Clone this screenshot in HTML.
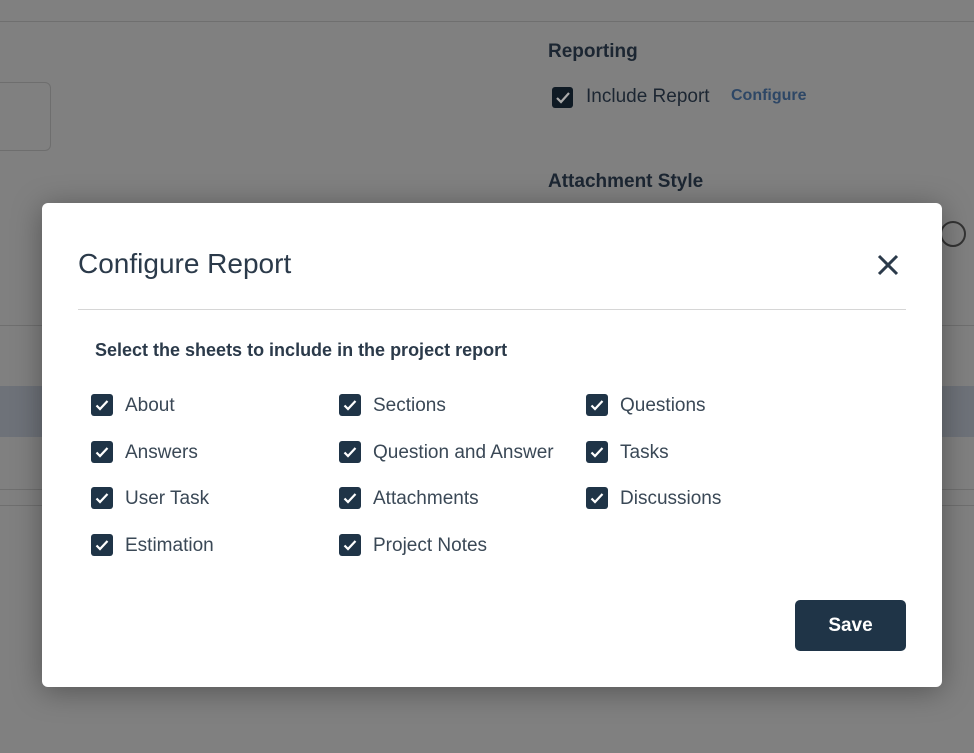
<!DOCTYPE html>
<html><head><style>
body{margin:0;width:974px;height:753px;background:#808080;font-family:"Liberation Sans",sans-serif;position:relative;overflow:hidden}
.a{position:absolute}
.ln{position:absolute;height:1px;background:#6f6f6f}
.cb{position:absolute;width:22px;height:22px;background:#1f3447;border-radius:3px}
.cb svg{position:absolute;left:3px;top:3px}
.lbl{position:absolute;font-size:19px;color:#3a4856;line-height:22px}
</style></head><body>
<div class="ln" style="left:0;top:21px;width:974px"></div>
<div class="a" style="left:-10px;top:82px;width:59px;height:67px;border:1px solid #6e6e6e;border-radius:6px"></div>
<div class="a" style="left:548px;top:41px;font-size:19px;font-weight:bold;color:#1c2632">Reporting</div>
<div class="a" style="left:552px;top:87px;width:21px;height:21px;background:#0f1a24;border-radius:3px"><svg width="21" height="21"><path d="M5 11l4 4 8-9" stroke="#aaa" stroke-width="2.2" fill="none"/></svg></div>
<div class="a" style="left:586px;top:86px;font-size:19px;color:#1c2632">Include Report</div>
<div class="a" style="left:731px;top:87px;font-size:16px;font-weight:bold;color:#2e4766">Configure</div>
<div class="a" style="left:548px;top:171px;font-size:19px;font-weight:bold;color:#1c2632">Attachment Style</div>
<div class="a" style="left:940px;top:221px;width:22px;height:22px;border:2px solid #333;border-radius:50%"></div>
<div class="ln" style="left:0;top:325px;width:974px"></div>
<div class="a" style="left:0;top:386px;width:974px;height:51px;background:#6e7279"></div>
<div class="ln" style="left:0;top:489px;width:974px"></div>
<div class="ln" style="left:0;top:505px;width:974px"></div>

<div class="a" style="left:42px;top:203px;width:900px;height:484px;background:#fff;border-radius:6px;box-shadow:0 4px 30px rgba(0,0,0,.35)">
<div class="a" style="left:36px;top:44px;font-size:28px;color:#2b3a4a;line-height:34px">Configure Report</div>
<svg class="a" style="left:835px;top:51px" width="22" height="22"><path d="M2 2L20 20M20 2L2 20" stroke="#2b3a4a" stroke-width="3"/></svg>
<div class="a" style="left:36px;top:106px;width:828px;height:1px;background:#d6d6d6"></div>
<div class="a" style="left:53px;top:137px;font-size:18px;font-weight:bold;color:#2b3a4a">Select the sheets to include in the project report</div>
</div>

<div id="items"></div>
<script>
var it=[[91,"About"],[339,"Sections"],[586,"Questions"],[91,"Answers"],[339,"Question and Answer"],[586,"Tasks"],[91,"User Task"],[339,"Attachments"],[586,"Discussions"],[91,"Estimation"],[339,"Project Notes"]];
var h="";
it.forEach(function(e,i){var y=394+Math.floor(i/3)*46.7;
h+='<div class="cb" style="left:'+e[0]+'px;top:'+y+'px"><svg width="16" height="16"><path d="M2.5 8.5l3.5 3.5 7.5-8" stroke="#fff" stroke-width="2.2" fill="none"/></svg></div><div class="lbl" style="left:'+(e[0]+34)+'px;top:'+(y+1)+'px">'+e[1]+'</div>';});
document.getElementById("items").innerHTML=h;
</script>
<div class="a" style="left:795px;top:600px;width:111px;height:51px;background:#1f3447;border-radius:5px;color:#fff;font-size:19px;font-weight:bold;text-align:center;line-height:52px">Save</div>
</body></html>
